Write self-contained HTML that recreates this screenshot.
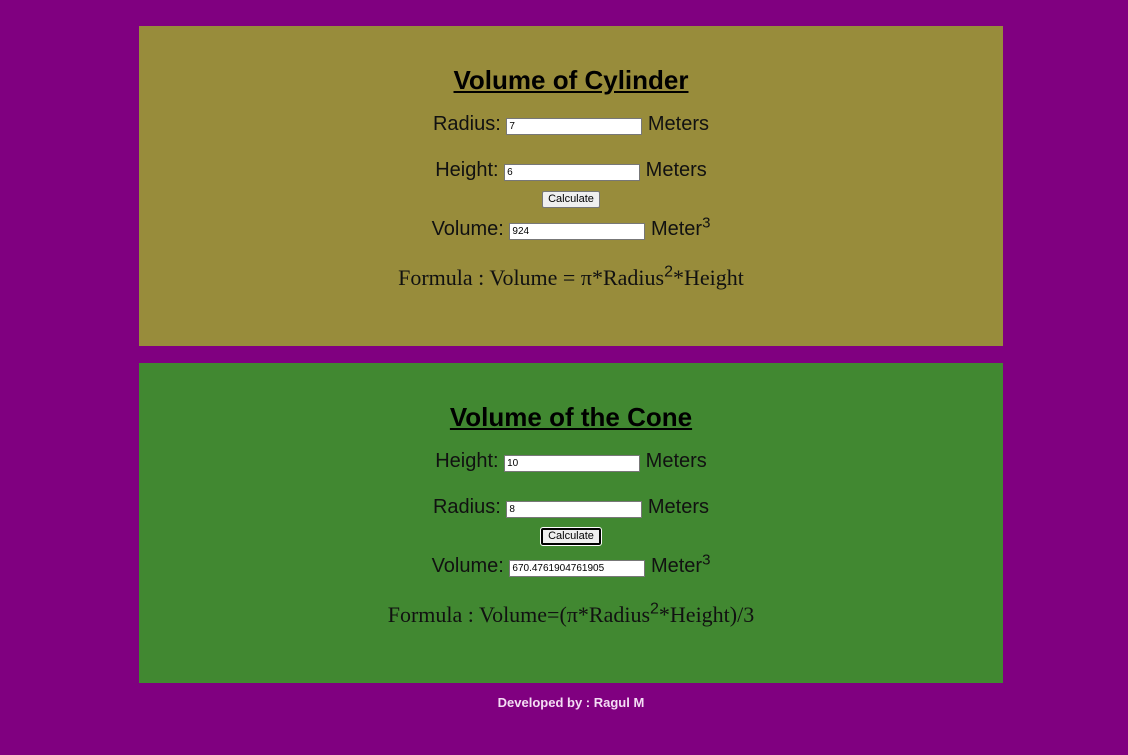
<!DOCTYPE html>
<html><head><style>
body{margin:0;background:#800080;width:1128px;height:755px;overflow:hidden;position:relative;font-family:"Liberation Sans",Arial,sans-serif}
.p{position:absolute;left:139px;width:864px;height:320px}
.r{position:absolute;left:0;width:864px;text-align:center;font-size:20px;color:#111;white-space:nowrap}
h2{position:absolute;left:0;width:864px;margin:0;text-align:center;font-size:26px;text-decoration:underline;color:#000;top:39px;line-height:30px}
input{box-sizing:border-box;width:136px;height:17px;border:1px solid #777;font-size:10px;padding:0 2px;line-height:15px;vertical-align:middle;font-family:"Liberation Sans",Arial,sans-serif;margin:0;position:relative;top:2px}
button{font-size:11px;padding:0 5px;background:#efefef;border:1px solid #777;border-radius:2px;font-family:"Liberation Sans",Arial,sans-serif;height:17px}
sup{font-size:15px;line-height:0}
.f{font-family:"Liberation Serif",Georgia,serif;font-size:22px}
.f sup{font-family:"Liberation Sans",Arial,sans-serif;font-size:16px}
</style></head><body>
<div class="p" style="top:26px;background:#988c3b">
<h2>Volume of Cylinder</h2>
<div class="r" style="top:87px">Radius: <input value="7"> Meters</div>
<div class="r" style="top:133px">Height: <input value="6"> Meters</div>
<div class="r" style="top:159px"><button>Calculate</button></div>
<div class="r" style="top:192px">Volume: <input value="924"> Meter<sup>3</sup></div>
<div class="r f" style="top:239px">Formula : Volume = π*Radius<sup>2</sup>*Height</div>
</div>
<div class="p" style="top:363px;background:#418831">
<h2>Volume of the Cone</h2>
<div class="r" style="top:87px">Height: <input value="10"> Meters</div>
<div class="r" style="top:133px">Radius: <input value="8"> Meters</div>
<div class="r" style="top:159px"><button style="border:2px solid #000;outline:1px solid #fff">Calculate</button></div>
<div class="r" style="top:192px">Volume: <input value="670.4761904761905"> Meter<sup>3</sup></div>
<div class="r f" style="top:239px">Formula : Volume=(π*Radius<sup>2</sup>*Height)/3</div>
</div>
<div style="position:absolute;top:695px;left:139px;width:864px;text-align:center;color:#f4dcf4;font-weight:bold;font-size:13px">Developed by : Ragul M</div>
</body></html>
